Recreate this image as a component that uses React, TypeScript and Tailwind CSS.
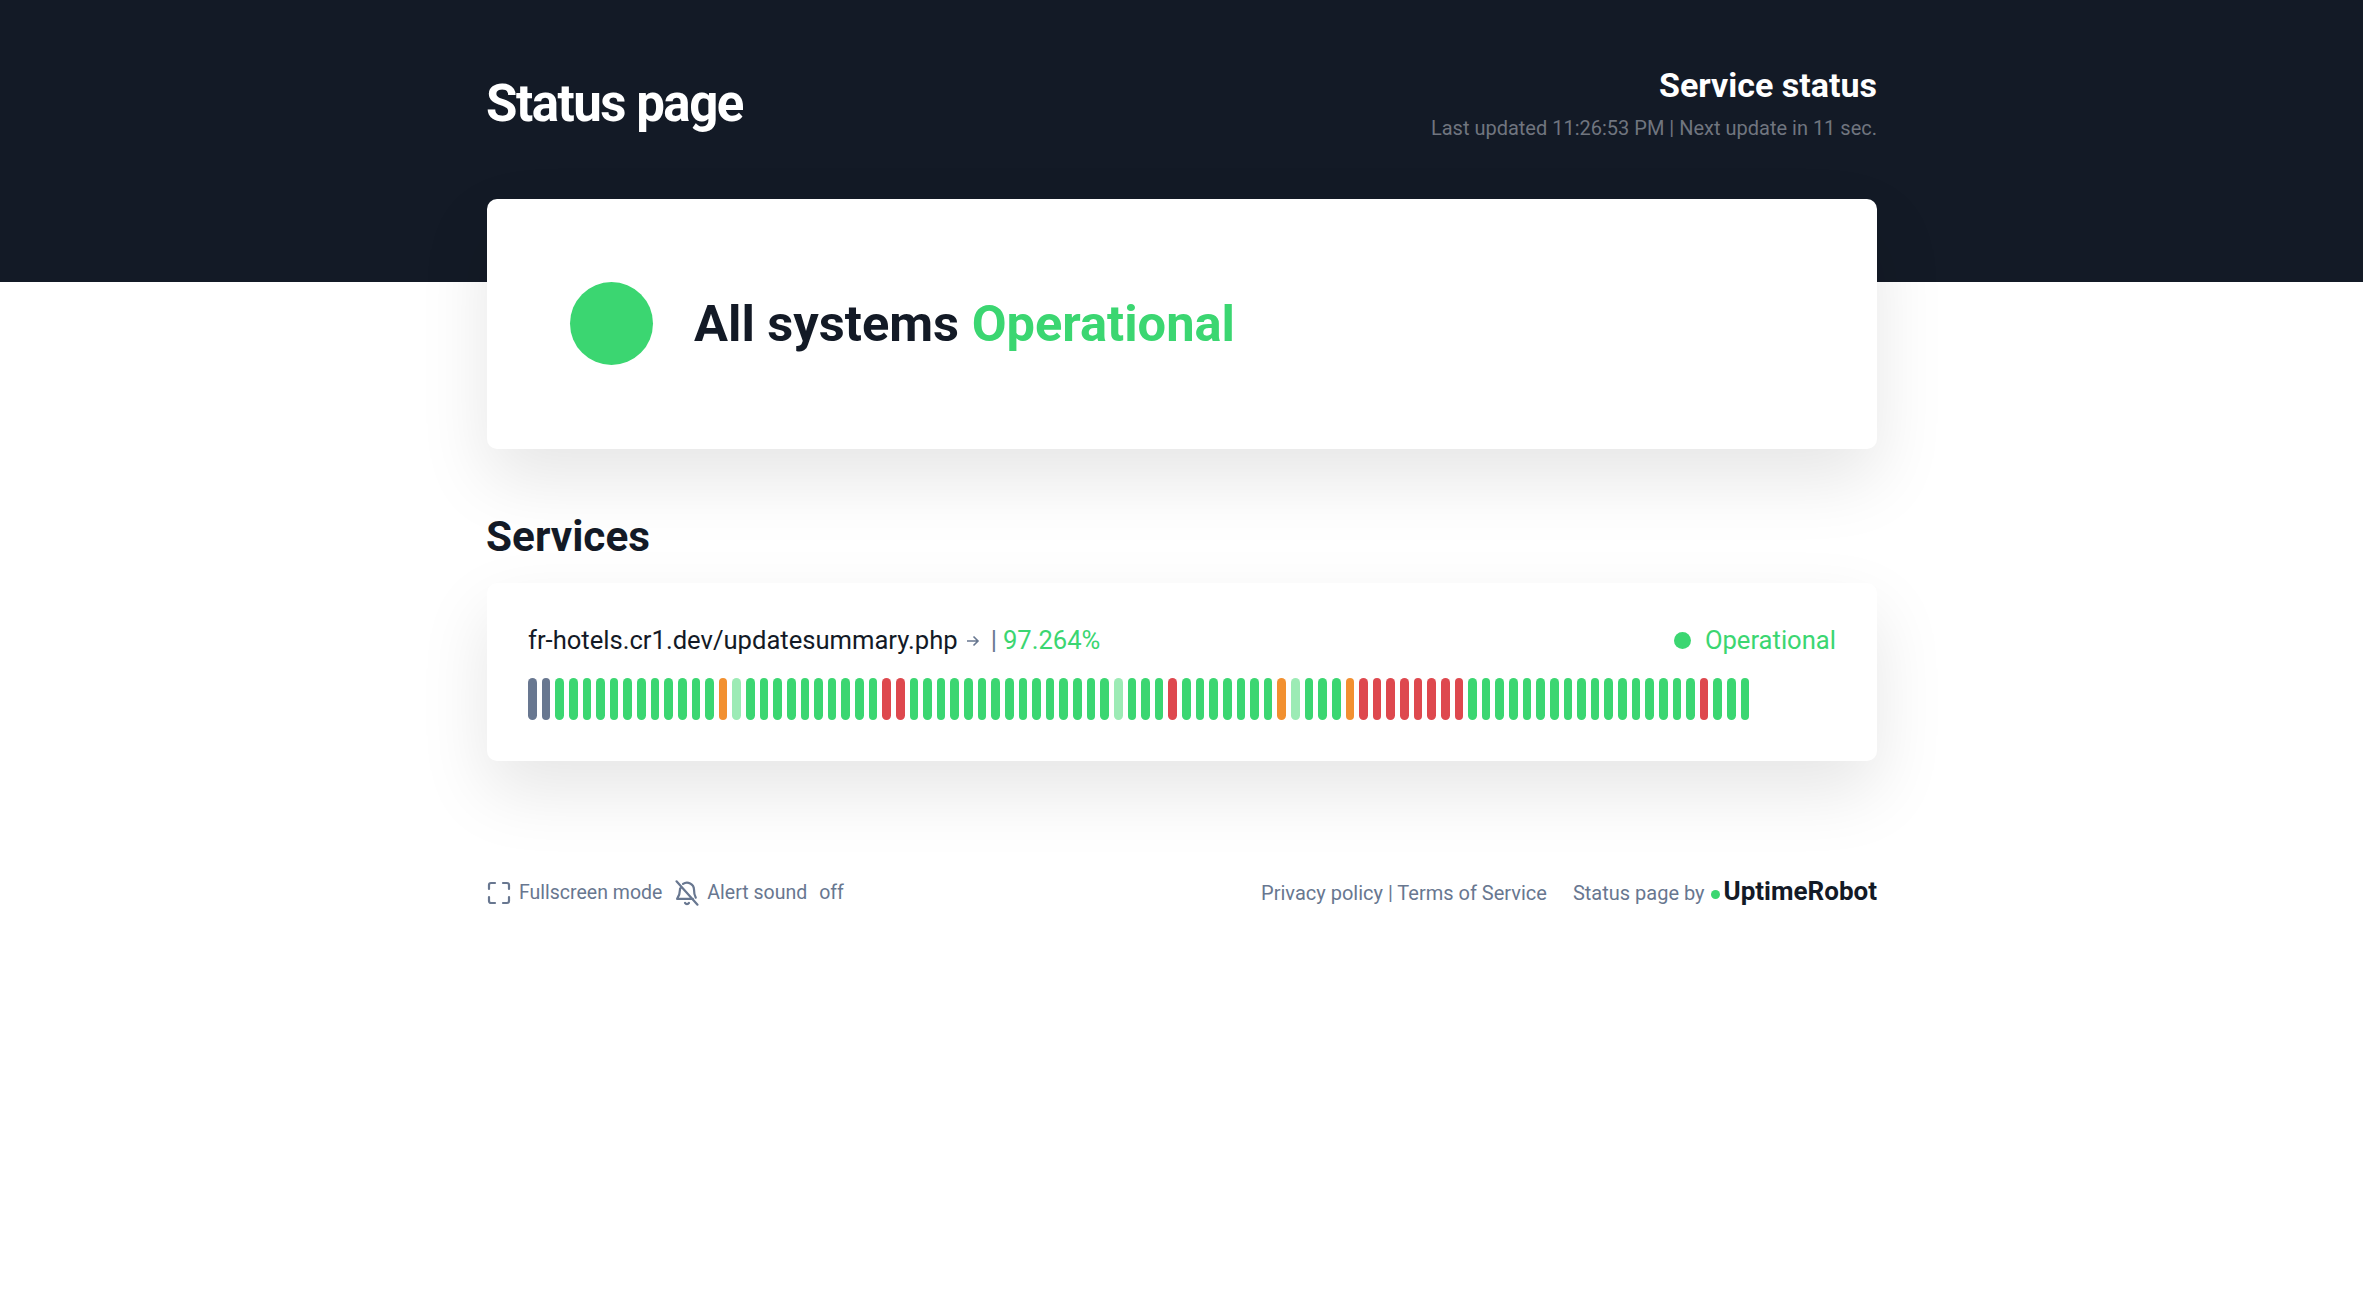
import React from "react";

const RED = [26, 27, 47, 61, 62, 63, 64, 65, 66, 67, 68, 86];
const ORANGE = [14, 55, 60];
const LIGHT = [15, 43, 56];
const SLATE = [0, 1];

function barClass(i: number) {
  if (SLATE.includes(i)) return "bg-[#687790]";
  if (RED.includes(i)) return "bg-[#de484e]";
  if (ORANGE.includes(i)) return "bg-[#f29030]";
  if (LIGHT.includes(i)) return "bg-[#9cebb5]";
  return "bg-[#3bd671]";
}

export default function App() {
  return (
    <div className="min-h-[1308px] bg-white font-['Roboto',sans-serif] text-[#131a26]">
      <header className="h-[282px] bg-[#131a26]">
        <div className="ml-[487px] flex w-[1390px] items-start justify-between pt-[64px]">
          <h1 className="-ml-[1px] mt-[10px] text-[51px] font-bold leading-[60px] tracking-[-1.5px] text-white">Status page</h1>
          <div className="text-right">
            <div className="text-[34px] font-bold leading-[42px] text-white">Service status</div>
            <div className="mt-[8px] text-[20px] leading-[28px] text-[#70757f]">Last updated 11:26:53 PM | Next update in 11 sec.</div>
          </div>
        </div>
      </header>
      <main className="relative -mt-[83px] ml-[487px] w-[1390px]">
        <section className="flex h-[250px] items-center gap-[41px] rounded-[10px] bg-white pl-[83px] shadow-[0_30px_70px_rgba(0,0,0,0.1)]">
          <div className="-mt-[2px] h-[83px] w-[83px] rounded-full bg-[#3bd671]" />
          <h2 className="text-[50.6px] font-bold leading-[60px]">
            All systems <span className="text-[#3bd671]">Operational</span>
          </h2>
        </section>
        <h3 className="-ml-[1px] mt-[62px] text-[42.300px] font-bold leading-[52px]">Services</h3>
        <section className="mt-[20px] h-[178px] rounded-[10px] bg-white px-[41px] pt-[40px] shadow-[0_30px_70px_rgba(0,0,0,0.1)]">
          <div className="flex items-center justify-between text-[25.6px] leading-[35px]">
            <div className="flex items-center">
              <span>fr-hotels.cr1.dev/updatesummary.php</span>
              <svg className="ml-[7px] h-[16px] w-[16px] text-[#687790]" viewBox="0 0 16 16" fill="none" stroke="currentColor" strokeWidth="1.6">
                <path d="M2 8h11M8.500 3.500 13 8l-4.500 4.500" />
              </svg>
              <span className="ml-[10px] text-[#687790]">|</span>
              <span className="ml-[6px] text-[#3bd671]">97.264%</span>
            </div>
            <div className="flex items-center gap-[14px] text-[#3bd671]">
              <span className="h-[17px] w-[17px] rounded-full bg-[#3bd671]" />
              <span>Operational</span>
            </div>
          </div>
          <div className="mt-[20px] flex h-[42px] gap-[5px]">
            {Array.from({ length: 90 }, (_, i) => (
              <div key={i} className={`h-full w-[8.64px] rounded-full ${barClass(i)}`} />
            ))}
          </div>
        </section>
        <footer className="mt-[118px] flex items-center justify-between text-[20px] leading-[28px] text-[#687790]">
          <div className="flex items-center text-[19.5px]">
            <svg className="h-[24px] w-[24px]" viewBox="0 0 24 24" fill="none" stroke="currentColor" strokeWidth="2.2" strokeLinecap="round" strokeLinejoin="round">
              <path d="M2 8V4a2 2 0 0 1 2-2h4M16 2h4a2 2 0 0 1 2 2v4M22 16v4a2 2 0 0 1-2 2h-4M8 22H4a2 2 0 0 1-2-2v-4" />
            </svg>
            <span className="ml-[8px]">Fullscreen mode</span>
            <svg className="ml-[11px] h-[28px] w-[28px]" viewBox="0 0 24 24" fill="none" stroke="currentColor" strokeWidth="1.9" strokeLinecap="round" strokeLinejoin="round">
              <path d="M3 2l18 20M8.600 4.200A6 6 0 0 1 18 9c0 3.300.7 5.600 1.500 7M6.200 8c-.1.3-.2.7-.2 1 0 4-1.500 6.500-2.500 8h13.500M10.300 20.500a2 2 0 0 0 3.400 0" />
            </svg>
            <span className="ml-[6px]">Alert sound</span>
            <span className="ml-[12px]">off</span>
          </div>
          <div className="flex items-center">
            <span>Privacy policy | Terms of Service</span>
            <span className="ml-[26px]">Status page by</span>
            <span className="ml-[6px] mt-[3px] h-[9px] w-[9px] rounded-full bg-[#3bd671]" />
            <span className="ml-[4px] -mt-[5px] text-[26px] font-bold leading-[28px] text-[#131a26]">UptimeRobot</span>
          </div>
        </footer>
      </main>
    </div>
  );
}
